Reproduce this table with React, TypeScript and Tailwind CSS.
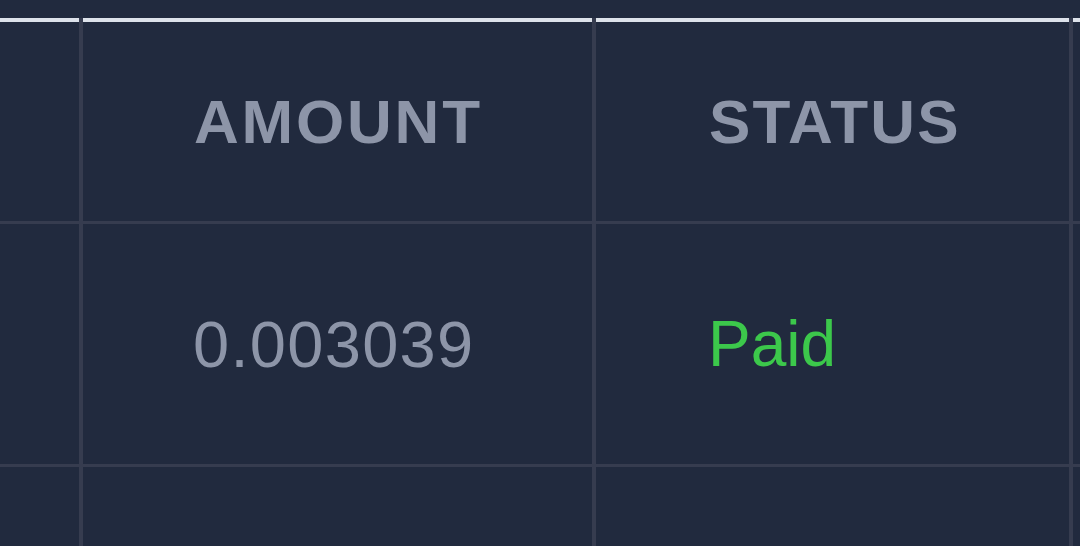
const rows = [{ amount: "0.003039", status: "Paid" }];

export default function App() {
  return (
    <div className="h-[546px] w-[1080px] overflow-hidden bg-[#212a3e] pt-[18px] font-['Liberation_Sans',Arial,sans-serif]">
      <div className="grid grid-cols-[79px_509px_473px_40px] gap-[4px] gap-y-[3px] bg-[#363c4f]">
        {/* header */}
        <div className="h-[203px] border-t-4 border-[#dde2ea] bg-[#212a3e]" />
        <div className="flex h-[203px] items-center border-t-4 border-[#dde2ea] bg-[#212a3e] pl-[111px]">
          <span className="text-[62px] font-bold leading-none tracking-[0.045em] text-[#8d95a8]">AMOUNT</span>
        </div>
        <div className="flex h-[203px] items-center border-t-4 border-[#dde2ea] bg-[#212a3e] pl-[113px]">
          <span className="text-[62px] font-bold leading-none tracking-[0.035em] text-[#8d95a8]">STATUS</span>
        </div>
        <div className="h-[203px] border-t-4 border-[#dde2ea] bg-[#212a3e]" />

        {/* body */}
        {rows.map((r) => (
          <>
            <div className="h-[240px] bg-[#212a3e]" />
            <div className="flex h-[240px] items-center bg-[#212a3e] pl-[110px]">
              <span className="text-[65px] leading-none tracking-[0.02em] text-[#8d95a8]">{r.amount}</span>
            </div>
            <div className="flex h-[240px] items-center bg-[#212a3e] pl-[112px]">
              <span className="text-[64px] leading-none text-[#3cc84b]">{r.status}</span>
            </div>
            <div className="h-[240px] bg-[#212a3e]" />
          </>
        ))}
        <div className="h-[100px] bg-[#212a3e]" />
        <div className="h-[100px] bg-[#212a3e]" />
        <div className="h-[100px] bg-[#212a3e]" />
        <div className="h-[100px] bg-[#212a3e]" />
      </div>
    </div>
  );
}
